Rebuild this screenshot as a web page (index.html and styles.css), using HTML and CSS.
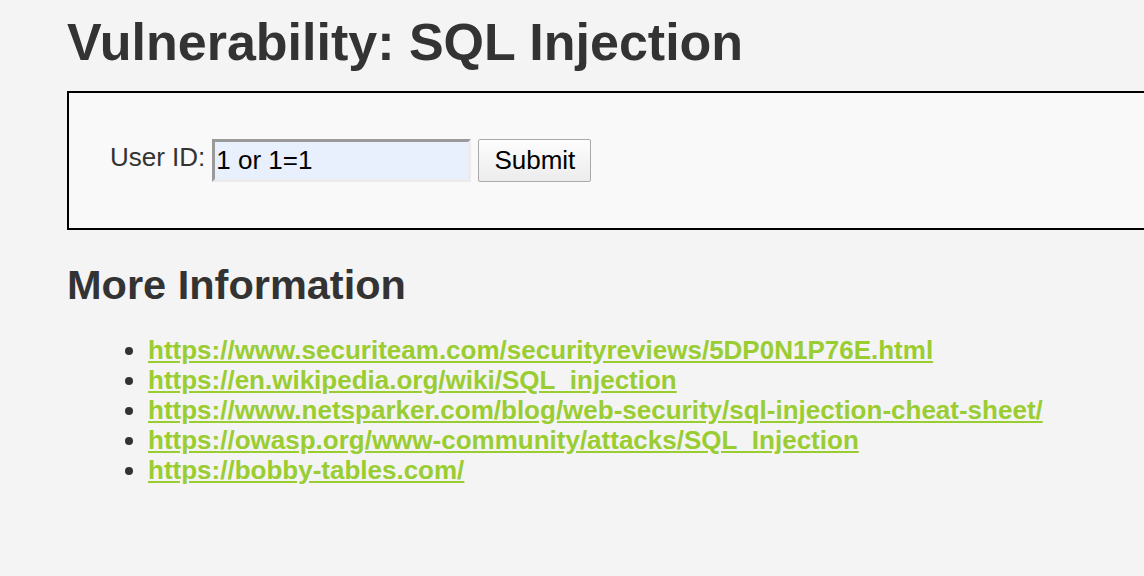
FILE: index.html
```html
<!DOCTYPE html>
<html>
<head>
<meta charset="utf-8">
<link rel="stylesheet" href="styles.css">
</head>
<body>
<div class="body-padded">
  <h1 class="title">Vulnerability: SQL Injection</h1>
  <div class="vulnerable-code-area">
    <form class="uid-form">
      <label class="uid-label" for="uid">User ID:</label>
      <input class="uid-input" id="uid" type="text" value="1 or 1=1">
      <button class="submit-btn" type="button">Submit</button>
    </form>
  </div>
  <h2 class="more-title">More Information</h2>
  <ul class="links">
    <li><a href="#">https://www.securiteam.com/securityreviews/5DP0N1P76E.html</a></li>
    <li><a href="#">https://en.wikipedia.org/wiki/SQL_injection</a></li>
    <li><a href="#">https://www.netsparker.com/blog/web-security/sql-injection-cheat-sheet/</a></li>
    <li><a href="#">https://owasp.org/www-community/attacks/SQL_Injection</a></li>
    <li><a href="#">https://bobby-tables.com/</a></li>
  </ul>
</div>
</body>
</html>
```
FILE: styles.css
```css
html, body {
  margin: 0;
  padding: 0;
  background: #f4f4f4;
  font-family: "Liberation Sans", Arial, sans-serif;
  color: #2f2f2f;
  overflow: hidden;
}
.body-padded {
  padding: 0 0 0 67px;
}
.title {
  margin: 0;
  padding-top: 14px;
  font-size: 52px;
  line-height: 56px;
  font-weight: bold;
  color: #333;
}
.vulnerable-code-area {
  margin-top: 21px;
  border: 2px solid #000;
  border-right: none;
  background: #f8f9f8;
  height: 135px;
  display: flex;
  align-items: center;
}
.uid-form {
  display: flex;
  align-items: center;
  padding-left: 41px;
}
.uid-label {
  font-size: 26px;
  color: #333;
  margin-right: 7px;
  position: relative;
  top: -3px;
}
.uid-input {
  box-sizing: border-box;
  width: 259px;
  height: 43px;
  border-style: solid;
  border-width: 3px;
  border-color: #9a9a9a #ececec #ececec #9a9a9a;
  background: #e8f0fe;
  font-family: "Liberation Sans", Arial, sans-serif;
  font-size: 26px;
  color: #000;
  padding: 0 1px;
  margin: 0;
}
.submit-btn {
  box-sizing: border-box;
  margin-left: 7px;
  width: 113px;
  height: 43px;
  border: 1px solid #a9a9a9;
  border-radius: 2px;
  background: linear-gradient(#fdfdfd, #ececec);
  font-family: "Liberation Sans", Arial, sans-serif;
  font-size: 26px;
  color: #000;
  padding: 0;
}
.more-title {
  margin: 0;
  padding-top: 30px;
  font-size: 41.5px;
  line-height: 50px;
  font-weight: bold;
  color: #333;
}
.links {
  margin: 25px 0 0 0;
  padding-left: 81px;
  list-style: disc;
  font-size: 26px;
  line-height: 30px;
  color: #333;
}
.links a {
  color: #9acd32;
  font-weight: bold;
  text-decoration: underline;
}
```
